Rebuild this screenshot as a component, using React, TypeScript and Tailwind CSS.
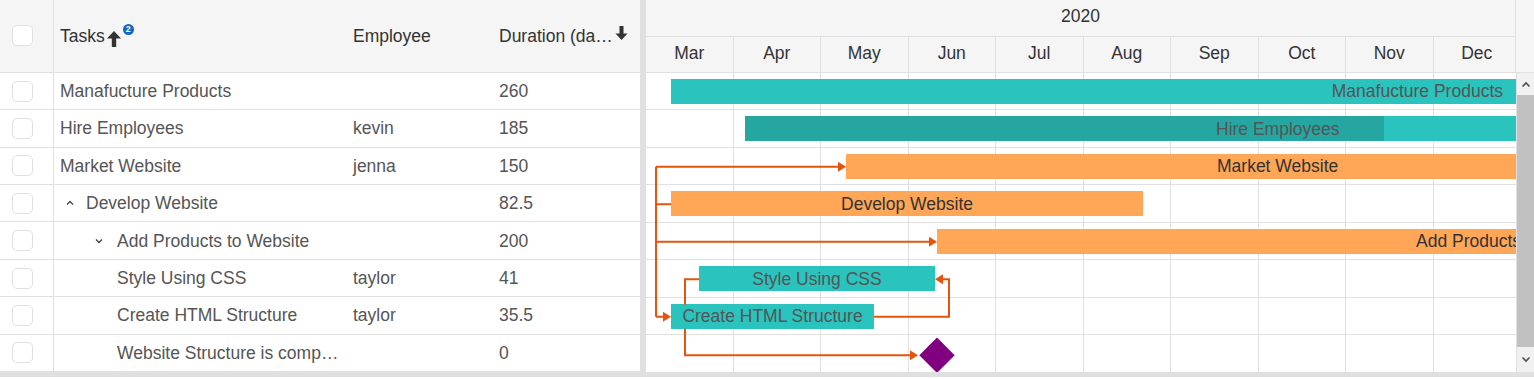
import React from "react";

type Row = {
  name: string;
  employee?: string;
  duration: string;
  indent: number;
  caret?: "up" | "down";
};

const rows: Row[] = [
  { name: "Manafucture Products", duration: "260", indent: 0 },
  { name: "Hire Employees", employee: "kevin", duration: "185", indent: 0 },
  { name: "Market Website", employee: "jenna", duration: "150", indent: 0 },
  { name: "Develop Website", duration: "82.5", indent: 1, caret: "up" },
  { name: "Add Products to Website", duration: "200", indent: 2, caret: "down" },
  { name: "Style Using CSS", employee: "taylor", duration: "41", indent: 2 },
  { name: "Create HTML Structure", employee: "taylor", duration: "35.5", indent: 2 },
  { name: "Website Structure is comp…", duration: "0", indent: 2 },
];

const months = ["Mar", "Apr", "May", "Jun", "Jul", "Aug", "Sep", "Oct", "Nov", "Dec"];

const ROW = 37.5;
const TEAL = "#2ac3bd";
const ORANGE = "#ffa657";
const LINK = "#e4540d";

type Bar = {
  row: number;
  left: number;
  width: number;
  color: string;
  text: string;
  textColor: string;
  align: "center" | "right" | "at";
  textAt?: number;
  progress?: number;
};

const bars: Bar[] = [
  { row: 0, left: 25, width: 860, color: TEAL, text: "Manafucture Products", textColor: "#555", align: "right" },
  { row: 1, left: 99, width: 790, color: TEAL, text: "Hire Employees", textColor: "#555", align: "at", textAt: 570, progress: 639 },
  { row: 2, left: 200, width: 690, color: ORANGE, text: "Market Website", textColor: "#333", align: "at", textAt: 571 },
  { row: 3, left: 25, width: 472, color: ORANGE, text: "Develop Website", textColor: "#333", align: "center" },
  { row: 4, left: 291, width: 700, color: ORANGE, text: "Add Products to Website", textColor: "#333", align: "at", textAt: 770 },
  { row: 5, left: 53, width: 236, color: TEAL, text: "Style Using CSS", textColor: "#555", align: "center" },
  { row: 6, left: 25, width: 203, color: TEAL, text: "Create HTML Structure", textColor: "#555", align: "center" },
];

function Checkbox() {
  return <div className="w-[21px] h-[21px] rounded-[5px] border border-[#e0e0e0] bg-white" />;
}

function Caret({ dir }: { dir: "up" | "down" }) {
  return (
    <svg width="10" height="10" viewBox="0 0 10 10" className={dir === "up" ? "mr-[11px]" : "mr-[13px]"}>
      <path
        d={dir === "up" ? "M2 6.5 L5 3.5 L8 6.5" : "M2 3.5 L5 6.5 L8 3.5"}
        fill="none"
        stroke="#444"
        strokeWidth="1.4"
      />
    </svg>
  );
}

function Grid() {
  return (
    <div className="w-[640px] shrink-0 flex flex-col">
      <div className="h-[73px] bg-[#f5f5f5] border-b border-[#e0e0e0] flex text-[#333]">
        <div className="w-[54px] shrink-0 border-r border-[#e0e0e0] flex items-center pl-[12px]">
          <Checkbox />
        </div>
        <div className="w-[292px] shrink-0 flex items-center pl-[6px]">
          <span>Tasks</span>
          <svg width="16" height="18" viewBox="0 0 16 18" className="ml-[1px] mt-[6px]">
            <path d="M8 1 L15 8.5 L10.2 8.5 L10.2 17 L5.8 17 L5.8 8.5 L1 8.5 Z" fill="#333" />
          </svg>
          <span className="ml-[1px] -mt-[12px] w-[11px] h-[11px] rounded-full bg-[#1266c2] text-white text-[9px] leading-[11px] font-bold flex items-center justify-center">
            2
          </span>
        </div>
        <div className="w-[147px] shrink-0 flex items-center pl-[7px]">Employee</div>
        <div className="flex-1 flex items-center pl-[6px] pr-[8px]">
          <span className="whitespace-nowrap">Duration (da…</span>
          <svg width="13" height="16" viewBox="0 0 13 16" className="ml-[2px] -mt-[6px]">
            <path d="M6.5 15 L12.5 8.5 L8.5 8.5 L8.5 1 L4.5 1 L4.5 8.5 L0.5 8.5 Z" fill="#333" />
          </svg>
        </div>
      </div>
      {rows.map((r, i) => (
        <div key={i} className="h-[37.5px] border-b border-[#e0e0e0] flex text-[#555]">
          <div className="w-[54px] shrink-0 border-r border-[#e0e0e0] flex items-center pl-[12px]">
            <Checkbox />
          </div>
          <div
            className={`w-[292px] shrink-0 flex items-center ${
              r.indent === 0 ? "pl-[6px]" : r.indent === 1 ? "pl-[11px]" : "pl-[40px]"
            }`}
          >
            {r.caret && <Caret dir={r.caret} />}
            {!r.caret && r.indent === 2 && <span className="w-[23px] shrink-0" />}
            <span className="whitespace-nowrap">{r.name}</span>
          </div>
          <div className="w-[147px] shrink-0 flex items-center pl-[7px]">{r.employee ?? ""}</div>
          <div className="flex-1 flex items-center pl-[6px]">{r.duration}</div>
        </div>
      ))}
    </div>
  );
}

function Links() {
  const c = (i: number) => ROW * i + ROW / 2;
  const arrowR = (x: number, y: number) => `M${x - 8} ${y - 5} L${x} ${y} L${x - 8} ${y + 5} Z`;
  const arrowL = (x: number, y: number) => `M${x + 8} ${y - 5} L${x} ${y} L${x + 8} ${y + 5} Z`;
  return (
    <svg className="absolute inset-0 pointer-events-none" width="870" height="300">
      <g fill="none" stroke={LINK} strokeWidth="2">
        <path d={`M10 ${c(2)} L10 ${c(6)}`} />
        <path d={`M10 ${c(2)} L192 ${c(2)}`} />
        <path d={`M10 ${c(3)} L25 ${c(3)}`} />
        <path d={`M10 ${c(4)} L283 ${c(4)}`} />
        <path d={`M10 ${c(6)} L17 ${c(6)}`} />
        <path d={`M53 ${c(5)} L39 ${c(5)} L39 ${c(6) - 12}`} />
        <path d={`M39 ${c(6) + 12} L39 ${c(7) + 1} L264 ${c(7) + 1}`} />
        <path d={`M228 ${c(6)} L303 ${c(6)} L303 ${c(5)} L297 ${c(5)}`} />
      </g>
      <g fill={LINK}>
        <path d={arrowR(200, c(2))} />
        <path d={arrowR(291, c(4))} />
        <path d={arrowR(25, c(6))} />
        <path d={arrowR(272, c(7) + 1)} />
        <path d={arrowL(289, c(5))} />
      </g>
      <rect
        x={291 - 12.5}
        y={c(7) + 1 - 12.5}
        width="25"
        height="25"
        fill="#800080"
        transform={`rotate(45 291 ${c(7) + 1})`}
      />
    </svg>
  );
}

function Chart() {
  return (
    <div className="flex-1 flex flex-col min-w-0">
      <div className="h-[73px] bg-[#f5f5f5] border-b border-[#e0e0e0] flex text-[#333]">
        <div className="w-[870px] shrink-0 flex flex-col border-r border-[#e0e0e0]">
          <div className="h-[37px] border-b border-[#e0e0e0] flex items-center justify-center pb-[4px]">2020</div>
          <div className="flex-1 flex overflow-hidden">
            {months.map((m) => (
              <div
                key={m}
                className="w-[87.5px] shrink-0 border-r border-[#e0e0e0] flex items-center justify-center pb-[2px]"
              >
                {m}
              </div>
            ))}
          </div>
        </div>
        <div className="flex-1" />
      </div>
      <div className="flex h-[300px]">
        <div className="relative w-[870px] shrink-0 overflow-hidden">
          <div className="absolute inset-0 flex">
            {months.map((m) => (
              <div key={m} className="w-[87.5px] shrink-0 border-r border-[#e0e0e0]" />
            ))}
          </div>
          <div className="absolute inset-0 flex flex-col">
            {rows.map((_, i) => (
              <div key={i} className="h-[37.5px] shrink-0 border-b border-[#e0e0e0]" />
            ))}
          </div>
          {bars.map((b) => (
            <div
              key={b.text}
              className="absolute h-[25px] overflow-hidden"
              style={{ left: b.left, width: b.width, top: b.row * ROW + 6, background: b.color }}
            >
              {b.progress && (
                <div className="absolute left-0 top-0 h-full bg-[#25a6a1]" style={{ width: b.progress }} />
              )}
              {b.align === "center" && (
                <div className="relative h-full flex items-center justify-center whitespace-nowrap" style={{ color: b.textColor }}>
                  {b.text}
                </div>
              )}
              {b.align === "right" && (
                <div
                  className="absolute top-0 h-full flex items-center whitespace-nowrap"
                  style={{ color: b.textColor, right: b.width - (870 - b.left) + 13 }}
                >
                  {b.text}
                </div>
              )}
              {b.align === "at" && (
                <div
                  className="absolute top-0 h-full flex items-center whitespace-nowrap"
                  style={{ color: b.textColor, left: (b.textAt ?? 0) - b.left }}
                >
                  {b.text}
                </div>
              )}
            </div>
          ))}
          <Links />
        </div>
        <div className="flex-1 bg-[#f1f1f1] border-l border-[#e0e0e0] flex flex-col items-center">
          <svg width="10" height="8" viewBox="0 0 10 8" className="mt-[8px]">
            <path d="M1.5 5.5 L5 2 L8.5 5.5" fill="none" stroke="#505050" strokeWidth="1.6" />
          </svg>
          <div className="w-full flex-1 bg-[#c1c1c1] mt-[6px] mb-[8px]" />
          <svg width="10" height="8" viewBox="0 0 10 8" className="mb-[9px]">
            <path d="M1.5 2.5 L5 6 L8.5 2.5" fill="none" stroke="#505050" strokeWidth="1.6" />
          </svg>
        </div>
      </div>
    </div>
  );
}

export default function App() {
  return (
    <div className="w-[1534px] h-[379px] bg-white overflow-hidden font-['Liberation_Sans',Arial,sans-serif] text-[17.5px]">
      <div className="flex h-[372px]">
        <Grid />
        <div className="w-[6px] shrink-0 bg-[#e0e0e0]" />
        <Chart />
      </div>
      <div className="h-[5px] bg-[#e0e0e0]" />
    </div>
  );
}
